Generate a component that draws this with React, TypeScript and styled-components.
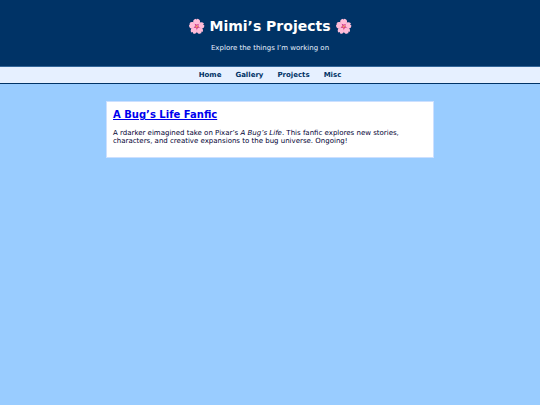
import React from "react";
import styled, { createGlobalStyle } from "styled-components";

const GlobalStyle = createGlobalStyle`
  body {
    margin: 0;
    background: #99ccff;
    color: #000033;
    font-family: Verdana, "DejaVu Sans", sans-serif;
    font-size: 7px;
  }
`;

const Header = styled.header`
  background: #003366;
  color: #ffffff;
  text-align: center;
  padding: 16px 8px 13px;
  border-bottom: 1px solid #336699;
`;

const Title = styled.h1`
  margin: 0;
  font-size: 14px;
  line-height: 20px;
`;

const Tagline = styled.p`
  margin: 7px 0 0;
  color: #e6f0ff;
  line-height: 10px;
`;

const Nav = styled.nav`
  display: flex;
  justify-content: center;
  gap: 14px;
  padding: 4px;
  background: #e6f0ff;
  border-bottom: 1px solid #003366;
`;

const NavLink = styled.a`
  color: #003366;
  font-weight: bold;
  line-height: 8px;
  text-decoration: none;
`;

const Main = styled.main`
  max-width: 328px;
  margin: 17px auto;
`;

const Card = styled.article`
  padding: 6px;
  background: #ffffff;
  border: 1px solid #cce0ff;
`;

const CardTitle = styled.h2`
  margin: 0;
  font-size: 10px;
  line-height: 13px;
`;

const CardText = styled.p`
  margin: 8px 0 6px;
  line-height: 8px;
`;

const links = ["Home", "Gallery", "Projects", "Misc"];

export default function App() {
  return (
    <>
      <GlobalStyle />
      <Header>
        <Title>🌸 Mimi’s Projects 🌸</Title>
        <Tagline>Explore the things I’m working on</Tagline>
      </Header>
      <Nav>
        {links.map((label) => (
          <NavLink key={label} href={`#${label.toLowerCase()}`}>{label}</NavLink>
        ))}
      </Nav>
      <Main>
        <Card>
          <CardTitle><a href="#fanfic">A Bug’s Life Fanfic</a></CardTitle>
          <CardText>
            A rdarker eimagined take on Pixar’s <em>A Bug’s Life</em>. This fanfic explores new stories, characters, and creative expansions to the bug universe. Ongoing!
          </CardText>
        </Card>
      </Main>
    </>
  );
}
